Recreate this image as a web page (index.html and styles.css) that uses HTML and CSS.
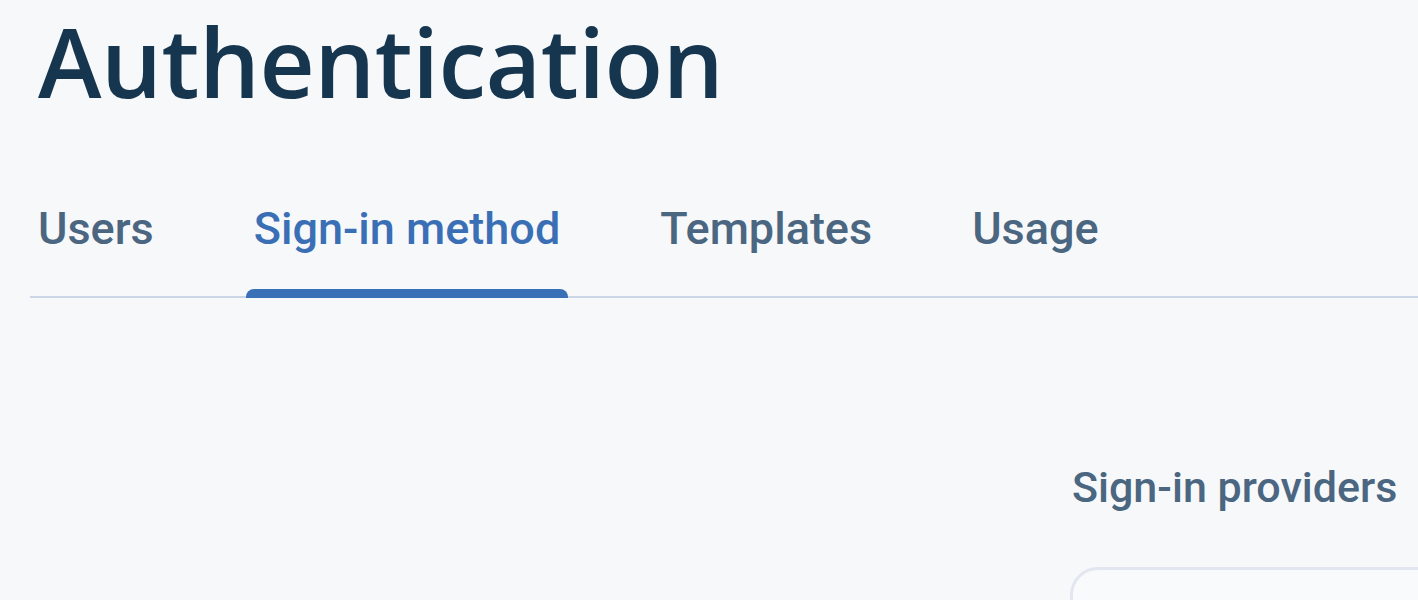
FILE: index.html
```html
<!DOCTYPE html>
<html lang="en">
<head>
<meta charset="utf-8">
<title>Authentication</title>
<link rel="stylesheet" href="styles.css">
</head>
<body>
<div class="page">
  <h1 class="title">Authentication</h1>
  <nav class="tabs">
    <a class="tab">Users</a>
    <a class="tab active">Sign-in method</a>
    <a class="tab">Templates</a>
    <a class="tab">Usage</a>
  </nav>
  <section class="providers">
    <h2 class="providers-title">Sign-in providers</h2>
    <div class="card"></div>
  </section>
</div>
</body>
</html>
```
FILE: styles.css
```css
html, body {
  margin: 0;
  padding: 0;
  background: #f7f8fa;
  overflow: hidden;
}
.page {
  padding-left: 38px;
  width: 1380px;
  height: 600px;
  overflow: hidden;
}
.title {
  margin: 0;
  padding-top: 1px;
  font-family: "Open Sans", sans-serif;
  font-weight: 600;
  font-size: 96px;
  line-height: 120px;
  color: #16364f;
  letter-spacing: -0.5px;
}
.tabs {
  display: flex;
  gap: 84px;
  margin-top: 82px;
  margin-left: -8px;
  border-bottom: 2px solid #cbd7e6;
  padding-left: 0;
}
.tab {
  font-family: Roboto, sans-serif;
  font-weight: 500;
  font-size: 45px;
  line-height: 52px;
  color: #4b6680;
  padding: 0 8px 41px;
  position: relative;
}
.tab.active {
  color: #3a6fb5;
}
.tab.active::after {
  content: "";
  position: absolute;
  left: 0;
  right: 0;
  bottom: -2px;
  height: 9px;
  background: #3a70b5;
  border-radius: 8px 8px 0 0;
}
.providers {
  margin-left: 1034px;
  padding-top: 164px;
}
.providers-title {
  margin: 0;
  font-family: Roboto, sans-serif;
  font-weight: 500;
  font-size: 43px;
  line-height: 50px;
  color: #4b6680;
}
.card {
  margin-top: 55px;
  margin-left: -2px;
  height: 200px;
  width: 600px;
  background: #f9fafb;
  border: 3px solid #e2e7ef;
  border-radius: 28px;
}
```
